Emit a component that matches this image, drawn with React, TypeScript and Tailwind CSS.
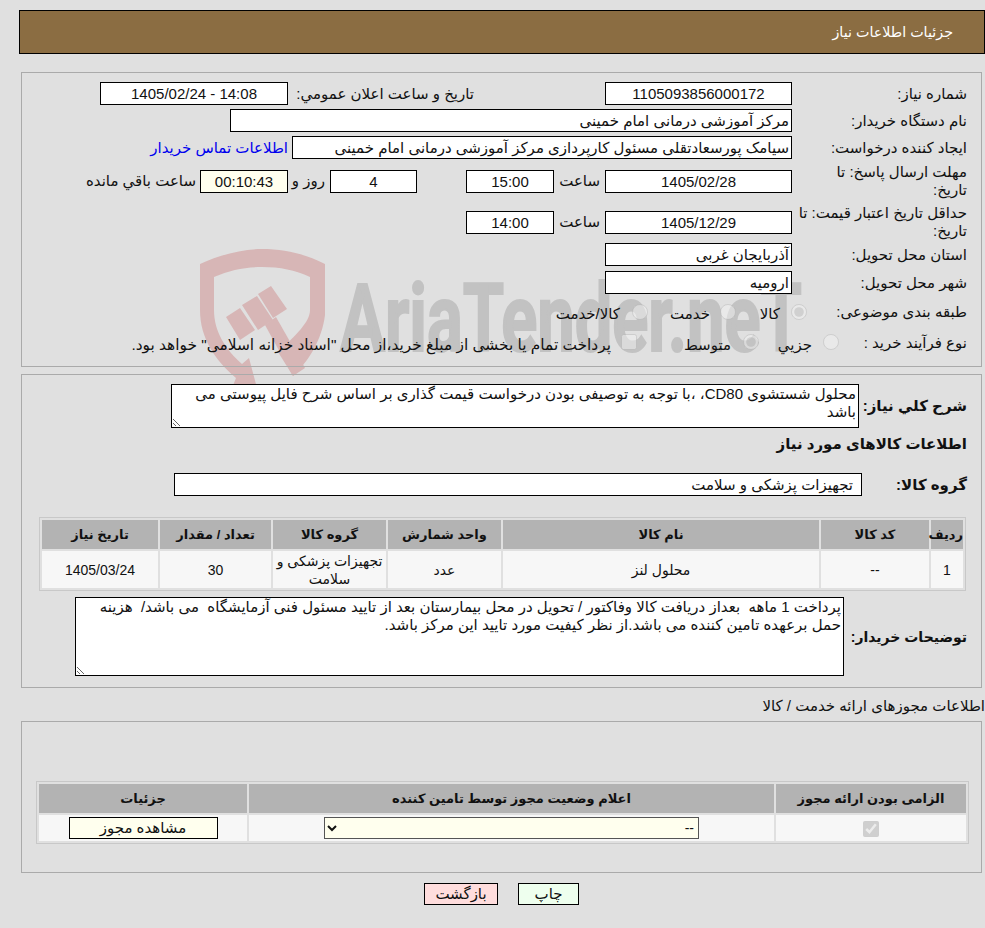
const inputBox = "h-[23px] shrink-0 border border-black bg-white leading-[21px] whitespace-nowrap overflow-hidden"
const cellHead = "bg-[#b3b3b3] font-bold text-center text-[13px] p-0"
const cellBody = "bg-[#f7f7f7] text-center align-middle text-[14px] leading-[18px] p-0"

const Box = ({w, center, yellow, children}: {w: string; center?: boolean; yellow?: boolean; children: React.ReactNode}) => (
  <div className={`${inputBox} ${w} ${center ? "text-center" : "pr-[2px]"} ${yellow ? "!bg-[#ffffee]" : ""}`}>{children}</div>
)

const Radio = ({checked}: {checked?: boolean}) => (
  <input type="radio" disabled defaultChecked={checked} className="m-0 h-4 w-4 shrink-0 opacity-70" />
)

const Watermark = () => (
  <svg className="pointer-events-none absolute left-0 top-0" width="985" height="928" viewBox="0 0 985 928">
    <path
      fill="#d7b6b6"
      fillRule="evenodd"
      d="M200 264 C222 254 243 249 262 249 C285 249 305 254 325 264 L325 315 C322 340 308 362 293 376 L278 352 C296 335 310 322 310 310 L310 277 C295 270 280 267 262 267 C245 267 230 270 214 277 L214 310 C214 332 226 350 242 364 L249 358 L257 388 L254 388 L232 388 L236 378 C215 360 200 338 200 310 Z"
    />
    <path fill="#d7b6b6" d="M226 317 L240 308 L255 330 L240 340 Z M242 305 L257 296 L273 320 L258 330 Z M258 294 L271 286 L287 309 L273 318 Z" />
    <path fill="#d7b6b6" d="M265 325 L276 317 L305 368 L293 376 Z" />
    <text
      x="340"
      y="351"
      textLength="462"
      lengthAdjust="spacingAndGlyphs"
      fill="#c2c2c2"
      stroke="#c2c2c2"
      strokeWidth="2"
      fontFamily="Roboto, sans-serif"
      fontWeight="700"
      fontSize="94"
      direction="ltr"
    >
      AriaTender.neT
    </text>
  </svg>
)

export default function App() {
  return (
    <div dir="rtl" className="relative h-[928px] w-[985px] overflow-hidden bg-[#e0e0e0] text-[15px] leading-[18px] text-[#111] font-['Liberation_Sans','DejaVu_Sans',sans-serif]">
      <Watermark />
      <div className="relative">
        <div className="pt-[10px]">
          <div className="ml-[19px] flex h-[44px] items-center border border-black bg-[#8b6d42] pr-[31px] text-[14.3px] text-white">
            جزئیات اطلاعات نیاز
          </div>
        </div>

        {/* panel 1 */}
        <div className="mr-[3px] ml-[21px] mt-[18px] h-[295px] border border-[#aaa] pr-[14px] pt-[9px]">
          <div className="flex items-center">
            <div className="w-[175px] shrink-0">شماره نیاز:</div>
            <Box w="w-[187px]" center>1105093856000172</Box>
            <div className="mr-[131px] w-[182px] shrink-0 whitespace-nowrap">تاریخ و ساعت اعلان عمومي:</div>
            <div className="mr-[4px]"><Box w="w-[188px]" center>14:08 - 1405/02/24</Box></div>
          </div>
          <div className="mt-[4px] flex items-center">
            <div className="w-[175px] shrink-0">نام دستگاه خریدار:</div>
            <Box w="w-[562px]">مرکز آموزشی درمانی امام خمینی</Box>
          </div>
          <div className="mt-[4px] flex items-center">
            <div className="w-[175px] shrink-0">ایجاد کننده درخواست:</div>
            <Box w="w-[500px]">سیامک پورسعادتقلی مسئول کارپردازی مرکز آموزشی درمانی امام خمینی</Box>
            <a className="mr-[4px] whitespace-nowrap text-[#0000ee]">اطلاعات تماس خریدار</a>
          </div>
          <div className="mt-[4px] flex h-[36px] items-center">
            <div className="w-[175px] shrink-0 pl-[8px]">مهلت ارسال پاسخ: تا تاریخ:</div>
            <Box w="w-[187px]" center>1405/02/28</Box>
            <div className="w-[51px] shrink-0 pr-[5px]">ساعت</div>
            <Box w="w-[88px]" center>15:00</Box>
            <div className="mr-[49px]"><Box w="w-[87px]" center>4</Box></div>
            <div className="w-[42px] shrink-0 whitespace-nowrap pr-[5px]">روز و</div>
            <Box w="w-[88px]" center yellow>00:10:43</Box>
            <div className="mr-[4px] whitespace-nowrap">ساعت باقي مانده</div>
          </div>
          <div className="mt-[5px] flex h-[36px] items-center">
            <div className="w-[175px] shrink-0">حداقل تاریخ اعتبار قیمت: تا تاریخ:</div>
            <Box w="w-[187px]" center>1405/12/29</Box>
            <div className="w-[51px] shrink-0 pr-[5px]">ساعت</div>
            <Box w="w-[88px]" center>14:00</Box>
          </div>
          <div className="mt-[3px] flex items-center">
            <div className="w-[175px] shrink-0">استان محل تحویل:</div>
            <Box w="w-[187px]">آذربایجان غربی</Box>
          </div>
          <div className="mt-[5px] flex items-center">
            <div className="w-[175px] shrink-0">شهر محل تحویل:</div>
            <Box w="w-[187px]">ارومیه</Box>
          </div>
          <div className="mt-[8px] flex h-[20px] items-center">
            <div className="w-[160px] shrink-0 whitespace-nowrap">طبقه بندی موضوعی:</div>
            <div className="flex w-[71px] shrink-0 items-center"><Radio checked /><span className="mr-[11px] mt-[4px]">کالا</span></div>
            <div className="flex w-[88px] shrink-0 items-center"><Radio /><span className="mr-[10px] mt-[4px]">خدمت</span></div>
            <div className="flex items-center"><Radio /><span className="mr-[12px] mt-[4px]">کالا/خدمت</span></div>
          </div>
          <div className="mt-[10px] flex h-[20px] items-center">
            <div className="w-[128px] shrink-0 whitespace-nowrap pt-[2px]">نوع فرآیند خرید :</div>
            <div className="flex w-[80px] shrink-0 items-center"><Radio /><span className="mr-[11px] mt-[5px]">جزيي</span></div>
            <div className="flex w-[122px] shrink-0 items-center"><Radio checked /><span className="mr-[12px] mt-[5px]">متوسط</span></div>
            <div className="flex items-center whitespace-nowrap">
              <input type="checkbox" disabled className="m-0 h-4 w-4 shrink-0 opacity-70" />
              <span className="mr-[10px] mt-[5px] text-[15.4px]">پرداخت تمام یا بخشی از مبلغ خرید،از محل "اسناد خزانه اسلامی" خواهد بود.</span>
            </div>
          </div>
        </div>

        {/* panel 2 */}
        <div className="mr-[3px] ml-[21px] mt-[7px] h-[314px] border border-[#aaa] pr-[14px] pt-[9px]">
          <div className="flex items-center">
            <div className="w-[108px] shrink-0 font-bold">شرح کلي نیاز:</div>
            <textarea
              readOnly
              dir="rtl"
              className="h-[44px] w-[688px] shrink-0 overflow-hidden border border-black bg-white px-[2px] leading-[18px] outline-none"
              defaultValue="محلول شستشوی CD80، ،با توجه به توصیفی بودن درخواست قیمت گذاری بر اساس شرح فایل پیوستی می باشد"
            />
          </div>
          <div className="mt-[7px] font-bold">اطلاعات کالاهای مورد نیاز</div>
          <div className="mt-[20px] flex items-center">
            <div className="w-[105px] shrink-0 font-bold">گروه کالا:</div>
            <Box w="w-[688px]"><span className="pr-[6px]">تجهیزات پزشکی و سلامت</span></Box>
          </div>
          <table className="mt-[21px] mr-[1px] w-[927px] table-fixed border-separate border-spacing-[2px] border border-[#c8c8c8]">
            <colgroup>
              <col className="w-[32px]" />
              <col className="w-[108px]" />
              <col className="w-[316px]" />
              <col className="w-[113px]" />
              <col className="w-[113px]" />
              <col className="w-[111px]" />
              <col />
            </colgroup>
            <thead>
              <tr className="h-[29px]">
                <th className={cellHead}>ردیف</th>
                <th className={cellHead}>کد کالا</th>
                <th className={cellHead}>نام کالا</th>
                <th className={cellHead}>واحد شمارش</th>
                <th className={cellHead}>گروه کالا</th>
                <th className={cellHead}>تعداد / مقدار</th>
                <th className={cellHead}>تاریخ نیاز</th>
              </tr>
            </thead>
            <tbody>
              <tr className="h-[37px]">
                <td className={cellBody}>1</td>
                <td className={cellBody}>--</td>
                <td className={cellBody}>محلول لنز</td>
                <td className={cellBody}>عدد</td>
                <td className={cellBody}>تجهیزات پزشکی و سلامت</td>
                <td className={cellBody}>30</td>
                <td className={cellBody}>1405/03/24</td>
              </tr>
            </tbody>
          </table>
          <div className="mt-[6px] flex items-center">
            <div className="w-[123px] shrink-0 whitespace-nowrap text-[14px] font-bold">توضیحات خریدار:</div>
            <textarea
              readOnly
              dir="rtl"
              className="h-[79px] w-[769px] shrink-0 overflow-hidden border border-black bg-white px-[2px] leading-[18px] outline-none"
              defaultValue="پرداخت 1 ماهه  بعداز دریافت کالا وفاکتور / تحویل در محل بیمارستان بعد از تایید مسئول فنی آزمایشگاه  می باشد/  هزینه حمل برعهده تامین کننده می باشد.از نظر کیفیت مورد تایید این مرکز باشد."
            />
          </div>
        </div>

        <div className="mt-[9px] h-[24px] whitespace-nowrap">اطلاعات مجوزهای ارائه خدمت / کالا</div>

        {/* panel 3 */}
        <div className="mr-[3px] ml-[21px] h-[152px] border border-[#aaa] pt-[59px] pr-[12px]">
          <table className="w-[933px] table-fixed border-separate border-spacing-[2px] border border-[#c8c8c8]">
            <colgroup>
              <col className="w-[190px]" />
              <col className="w-[525px]" />
              <col />
            </colgroup>
            <thead>
              <tr className="h-[29px]">
                <th className={cellHead}>الزامی بودن ارائه مجوز</th>
                <th className={cellHead}>اعلام وضعیت مجوز توسط تامین کننده</th>
                <th className={cellHead}>جزئیات</th>
              </tr>
            </thead>
            <tbody>
              <tr className="h-[26px]">
                <td className={cellBody}>
                  <input type="checkbox" disabled defaultChecked className="m-0 h-4 w-4 align-middle" />
                </td>
                <td className={cellBody}>
                  <select dir="rtl" className="h-[22px] w-[375px] border border-[#555] bg-[#ffffee] align-middle text-[14px]">
                    <option>--</option>
                  </select>
                </td>
                <td className={cellBody}>
                  <button className="h-[22px] w-[149px] border border-black bg-[#ffffee] align-middle text-[15px]">مشاهده مجوز</button>
                </td>
              </tr>
            </tbody>
          </table>
        </div>

        <div className="mt-[10px] flex justify-center gap-[20px] pl-[18px]">
          <button className="h-[22px] w-[61px] border border-black bg-[#eeffee]">چاپ</button>
          <button className="h-[22px] w-[74px] border border-black bg-[#ffdddd]">بازگشت</button>
        </div>
      </div>
    </div>
  )
}
